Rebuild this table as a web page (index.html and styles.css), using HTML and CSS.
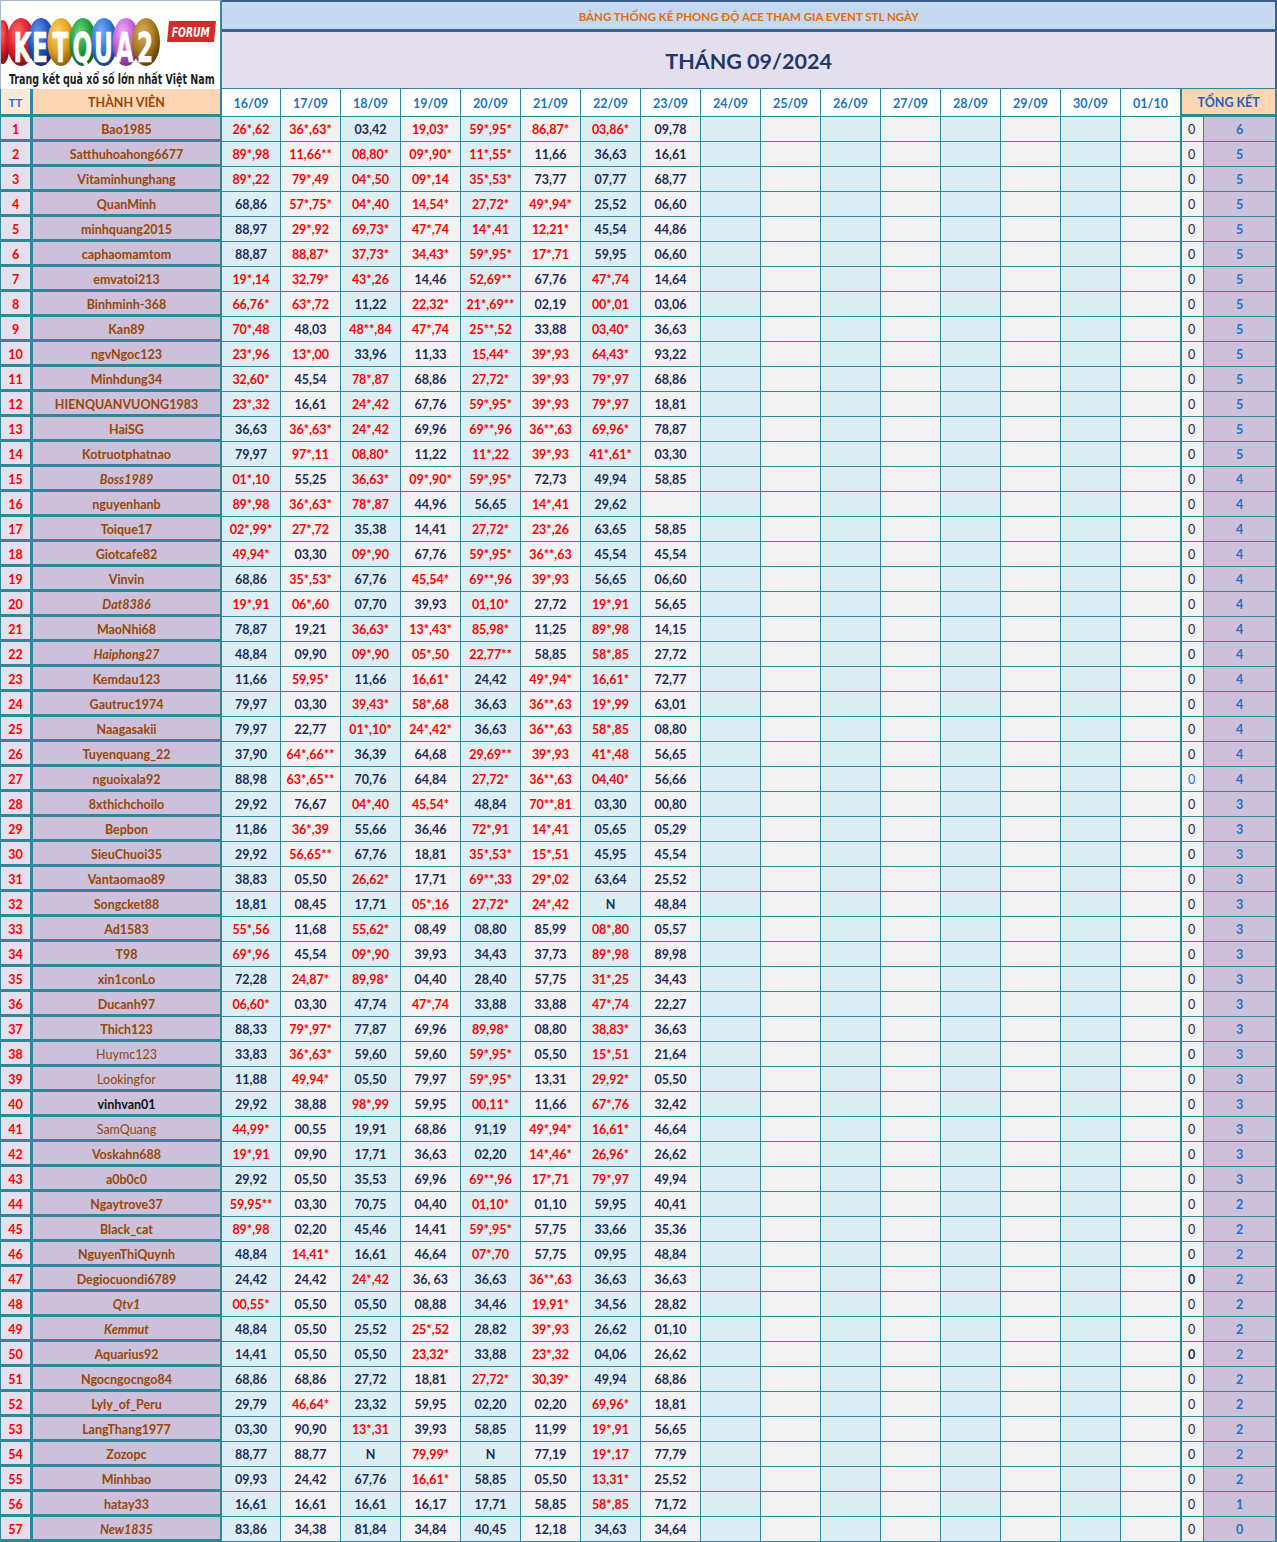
FILE: index.html
```html
<!DOCTYPE html>
<html lang="vi">
<head>
<meta charset="utf-8">
<title>Bảng thống kê phong độ ACE - Tháng 09/2024</title>
<link rel="stylesheet" href="styles.css">
</head>
<body>
<table class="sheet">
<colgroup>
<col class="w-tt"><col class="w-name"><col class="w-first">
<col class="w-d"><col class="w-d"><col class="w-d"><col class="w-d"><col class="w-d"><col class="w-d"><col class="w-d">
<col class="w-d"><col class="w-d"><col class="w-d"><col class="w-d"><col class="w-d"><col class="w-d"><col class="w-d">
<col class="w-last"><col class="w-zero"><col class="w-count">
</colgroup>
<tr class="t1">
<td class="logo" rowspan="2" colspan="2">
<svg class="logo-art" width="219" height="88" viewBox="1 1 219 88" xmlns="http://www.w3.org/2000/svg">
<defs>
<radialGradient id="gr" cx="38%" cy="30%" r="75%"><stop offset="0" stop-color="#ff6a6a"/><stop offset="0.55" stop-color="#d81e28"/><stop offset="1" stop-color="#7c0810"/></radialGradient>
<radialGradient id="gb" cx="38%" cy="30%" r="75%"><stop offset="0" stop-color="#6a9af2"/><stop offset="0.55" stop-color="#1f50b8"/><stop offset="1" stop-color="#0b2468"/></radialGradient>
<radialGradient id="gy" cx="38%" cy="30%" r="75%"><stop offset="0" stop-color="#ffd86a"/><stop offset="0.55" stop-color="#e0a020"/><stop offset="1" stop-color="#875606"/></radialGradient>
<radialGradient id="gg" cx="38%" cy="30%" r="75%"><stop offset="0" stop-color="#6ad67a"/><stop offset="0.55" stop-color="#1f9a3a"/><stop offset="1" stop-color="#0a5418"/></radialGradient>
<radialGradient id="gc" cx="38%" cy="30%" r="75%"><stop offset="0" stop-color="#7ab2ff"/><stop offset="0.55" stop-color="#2f70d0"/><stop offset="1" stop-color="#123c86"/></radialGradient>
<radialGradient id="gp" cx="38%" cy="30%" r="75%"><stop offset="0" stop-color="#f4b0ff"/><stop offset="0.55" stop-color="#c058d0"/><stop offset="1" stop-color="#74287e"/></radialGradient>
<radialGradient id="gw" cx="38%" cy="30%" r="75%"><stop offset="0" stop-color="#dcb060"/><stop offset="0.55" stop-color="#a87820"/><stop offset="1" stop-color="#563806"/></radialGradient>
</defs>
<ellipse cx="3" cy="42" rx="7" ry="22" fill="url(#gr)"/>
<ellipse cx="21" cy="42" rx="14" ry="24" fill="url(#gr)"/>
<ellipse cx="41" cy="42" rx="13.5" ry="24" fill="url(#gb)"/>
<ellipse cx="61" cy="42" rx="13.5" ry="24" fill="url(#gy)"/>
<ellipse cx="83" cy="42" rx="13.5" ry="24" fill="url(#gg)"/>
<ellipse cx="104" cy="42" rx="13.5" ry="24" fill="url(#gc)"/>
<ellipse cx="126" cy="42" rx="13.5" ry="24" fill="url(#gp)"/>
<ellipse cx="146" cy="42" rx="14" ry="24" fill="url(#gw)"/>
<text class="logo-letters" transform="scale(0.58,1)" x="38.8 69 104.3 142.2 178.4 214.7 250" y="62" text-anchor="middle">KETQUA2</text>
<path d="M169 21 L216 21 L214 42 L167 42 Z" fill="#d42a2a"/>
<text class="logo-forum" transform="scale(0.76,1)" x="226" y="37" textLength="50" lengthAdjust="spacingAndGlyphs">FORUM</text>
<text class="logo-tag" transform="scale(0.8,1)" x="11.3" y="84" textLength="257" lengthAdjust="spacingAndGlyphs">Trang kết quả xổ số lớn nhất Việt Nam</text>
</svg>
</td>
<td class="sub" colspan="18">BẢNG THỐNG KÊ PHONG ĐỘ ACE THAM GIA EVENT STL NGÀY</td>
</tr>
<tr class="t2"><td class="month" colspan="18">THÁNG 09/2024</td></tr>
<tr class="head">
<th class="tt">TT</th><th class="member">THÀNH VIÊN</th>
<th>16/09</th><th>17/09</th><th>18/09</th><th>19/09</th><th>20/09</th><th>21/09</th><th>22/09</th><th>23/09</th>
<th>24/09</th><th>25/09</th><th>26/09</th><th>27/09</th><th>28/09</th><th>29/09</th><th>30/09</th><th class="last">01/10</th>
<th class="total" colspan="2">TỔNG KẾT</th>
</tr>
<tr class="r"><td class="no">1</td><td class="name">Bao1985</td><td class="s">26*,62</td><td class="s">36*,63*</td><td>03,42</td><td class="s">19,03*</td><td class="s">59*,95*</td><td class="s">86,87*</td><td class="s">03,86*</td><td>09,78</td><td></td><td></td><td></td><td></td><td></td><td></td><td></td><td></td><td class="z">0</td><td class="n">6</td></tr>
<tr class="r"><td class="no">2</td><td class="name">Satthuhoahong6677</td><td class="s">89*,98</td><td class="s">11,66**</td><td class="s">08,80*</td><td class="s">09*,90*</td><td class="s">11*,55*</td><td>11,66</td><td>36,63</td><td>16,61</td><td></td><td></td><td></td><td></td><td></td><td></td><td></td><td></td><td class="z">0</td><td class="n">5</td></tr>
<tr class="r"><td class="no">3</td><td class="name">Vitaminhunghang</td><td class="s">89*,22</td><td class="s">79*,49</td><td class="s">04*,50</td><td class="s">09*,14</td><td class="s">35*,53*</td><td>73,77</td><td>07,77</td><td>68,77</td><td></td><td></td><td></td><td></td><td></td><td></td><td></td><td></td><td class="z">0</td><td class="n">5</td></tr>
<tr class="r"><td class="no">4</td><td class="name">QuanMinh</td><td>68,86</td><td class="s">57*,75*</td><td class="s">04*,40</td><td class="s">14,54*</td><td class="s">27,72*</td><td class="s">49*,94*</td><td>25,52</td><td>06,60</td><td></td><td></td><td></td><td></td><td></td><td></td><td></td><td></td><td class="z">0</td><td class="n">5</td></tr>
<tr class="r"><td class="no">5</td><td class="name">minhquang2015</td><td>88,97</td><td class="s">29*,92</td><td class="s">69,73*</td><td class="s">47*,74</td><td class="s">14*,41</td><td class="s">12,21*</td><td>45,54</td><td>44,86</td><td></td><td></td><td></td><td></td><td></td><td></td><td></td><td></td><td class="z">0</td><td class="n">5</td></tr>
<tr class="r"><td class="no">6</td><td class="name">caphaomamtom</td><td>88,87</td><td class="s">88,87*</td><td class="s">37,73*</td><td class="s">34,43*</td><td class="s">59*,95*</td><td class="s">17*,71</td><td>59,95</td><td>06,60</td><td></td><td></td><td></td><td></td><td></td><td></td><td></td><td></td><td class="z">0</td><td class="n">5</td></tr>
<tr class="r"><td class="no">7</td><td class="name">emvatoi213</td><td class="s">19*,14</td><td class="s">32,79*</td><td class="s">43*,26</td><td>14,46</td><td class="s">52,69**</td><td>67,76</td><td class="s">47*,74</td><td>14,64</td><td></td><td></td><td></td><td></td><td></td><td></td><td></td><td></td><td class="z">0</td><td class="n">5</td></tr>
<tr class="r"><td class="no">8</td><td class="name">Binhminh-368</td><td class="s">66,76*</td><td class="s">63*,72</td><td>11,22</td><td class="s">22,32*</td><td class="s">21*,69**</td><td>02,19</td><td class="s">00*,01</td><td>03,06</td><td></td><td></td><td></td><td></td><td></td><td></td><td></td><td></td><td class="z">0</td><td class="n">5</td></tr>
<tr class="r"><td class="no">9</td><td class="name">Kan89</td><td class="s">70*,48</td><td>48,03</td><td class="s">48**,84</td><td class="s">47*,74</td><td class="s">25**,52</td><td>33,88</td><td class="s">03,40*</td><td>36,63</td><td></td><td></td><td></td><td></td><td></td><td></td><td></td><td></td><td class="z">0</td><td class="n">5</td></tr>
<tr class="r"><td class="no">10</td><td class="name">ngvNgoc123</td><td class="s">23*,96</td><td class="s">13*,00</td><td>33,96</td><td>11,33</td><td class="s">15,44*</td><td class="s">39*,93</td><td class="s">64,43*</td><td>93,22</td><td></td><td></td><td></td><td></td><td></td><td></td><td></td><td></td><td class="z">0</td><td class="n">5</td></tr>
<tr class="r"><td class="no">11</td><td class="name">Minhdung34</td><td class="s">32,60*</td><td>45,54</td><td class="s">78*,87</td><td>68,86</td><td class="s">27,72*</td><td class="s">39*,93</td><td class="s">79*,97</td><td>68,86</td><td></td><td></td><td></td><td></td><td></td><td></td><td></td><td></td><td class="z">0</td><td class="n">5</td></tr>
<tr class="r"><td class="no">12</td><td class="name">HIENQUANVUONG1983</td><td class="s">23*,32</td><td>16,61</td><td class="s">24*,42</td><td>67,76</td><td class="s">59*,95*</td><td class="s">39*,93</td><td class="s">79*,97</td><td>18,81</td><td></td><td></td><td></td><td></td><td></td><td></td><td></td><td></td><td class="z">0</td><td class="n">5</td></tr>
<tr class="r"><td class="no">13</td><td class="name">HaiSG</td><td>36,63</td><td class="s">36*,63*</td><td class="s">24*,42</td><td>69,96</td><td class="s">69**,96</td><td class="s">36**,63</td><td class="s">69,96*</td><td>78,87</td><td></td><td></td><td></td><td></td><td></td><td></td><td></td><td></td><td class="z">0</td><td class="n">5</td></tr>
<tr class="r"><td class="no">14</td><td class="name">Kotruotphatnao</td><td>79,97</td><td class="s">97*,11</td><td class="s">08,80*</td><td>11,22</td><td class="s">11*,22</td><td class="s">39*,93</td><td class="s">41*,61*</td><td>03,30</td><td></td><td></td><td></td><td></td><td></td><td></td><td></td><td></td><td class="z">0</td><td class="n">5</td></tr>
<tr class="r"><td class="no">15</td><td class="name i">Boss1989</td><td class="s">01*,10</td><td>55,25</td><td class="s">36,63*</td><td class="s">09*,90*</td><td class="s">59*,95*</td><td>72,73</td><td>49,94</td><td>58,85</td><td></td><td></td><td></td><td></td><td></td><td></td><td></td><td></td><td class="z">0</td><td class="n">4</td></tr>
<tr class="r"><td class="no">16</td><td class="name">nguyenhanb</td><td class="s">89*,98</td><td class="s">36*,63*</td><td class="s">78*,87</td><td>44,96</td><td>56,65</td><td class="s">14*,41</td><td>29,62</td><td></td><td></td><td></td><td></td><td></td><td></td><td></td><td></td><td></td><td class="z">0</td><td class="n">4</td></tr>
<tr class="r"><td class="no">17</td><td class="name">Toique17</td><td class="s">02*,99*</td><td class="s">27*,72</td><td>35,38</td><td>14,41</td><td class="s">27,72*</td><td class="s">23*,26</td><td>63,65</td><td>58,85</td><td></td><td></td><td></td><td></td><td></td><td></td><td></td><td></td><td class="z">0</td><td class="n">4</td></tr>
<tr class="r"><td class="no">18</td><td class="name">Giotcafe82</td><td class="s">49,94*</td><td>03,30</td><td class="s">09*,90</td><td>67,76</td><td class="s">59*,95*</td><td class="s">36**,63</td><td>45,54</td><td>45,54</td><td></td><td></td><td></td><td></td><td></td><td></td><td></td><td></td><td class="z">0</td><td class="n">4</td></tr>
<tr class="r"><td class="no">19</td><td class="name">Vinvin</td><td>68,86</td><td class="s">35*,53*</td><td>67,76</td><td class="s">45,54*</td><td class="s">69**,96</td><td class="s">39*,93</td><td>56,65</td><td>06,60</td><td></td><td></td><td></td><td></td><td></td><td></td><td></td><td></td><td class="z">0</td><td class="n">4</td></tr>
<tr class="r"><td class="no">20</td><td class="name i">Dat8386</td><td class="s">19*,91</td><td class="s">06*,60</td><td>07,70</td><td>39,93</td><td class="s">01,10*</td><td>27,72</td><td class="s">19*,91</td><td>56,65</td><td></td><td></td><td></td><td></td><td></td><td></td><td></td><td></td><td class="z">0</td><td class="n">4</td></tr>
<tr class="r"><td class="no">21</td><td class="name">MaoNhi68</td><td>78,87</td><td>19,21</td><td class="s">36,63*</td><td class="s">13*,43*</td><td class="s">85,98*</td><td>11,25</td><td class="s">89*,98</td><td>14,15</td><td></td><td></td><td></td><td></td><td></td><td></td><td></td><td></td><td class="z">0</td><td class="n">4</td></tr>
<tr class="r"><td class="no">22</td><td class="name i">Haiphong27</td><td>48,84</td><td>09,90</td><td class="s">09*,90</td><td class="s">05*,50</td><td class="s">22,77**</td><td>58,85</td><td class="s">58*,85</td><td>27,72</td><td></td><td></td><td></td><td></td><td></td><td></td><td></td><td></td><td class="z">0</td><td class="n">4</td></tr>
<tr class="r"><td class="no">23</td><td class="name">Kemdau123</td><td>11,66</td><td class="s">59,95*</td><td>11,66</td><td class="s">16,61*</td><td>24,42</td><td class="s">49*,94*</td><td class="s">16,61*</td><td>72,77</td><td></td><td></td><td></td><td></td><td></td><td></td><td></td><td></td><td class="z">0</td><td class="n">4</td></tr>
<tr class="r"><td class="no">24</td><td class="name">Gautruc1974</td><td>79,97</td><td>03,30</td><td class="s">39,43*</td><td class="s">58*,68</td><td>36,63</td><td class="s">36**,63</td><td class="s">19*,99</td><td>63,01</td><td></td><td></td><td></td><td></td><td></td><td></td><td></td><td></td><td class="z">0</td><td class="n">4</td></tr>
<tr class="r"><td class="no">25</td><td class="name">Naagasakii</td><td>79,97</td><td>22,77</td><td class="s">01*,10*</td><td class="s">24*,42*</td><td>36,63</td><td class="s">36**,63</td><td class="s">58*,85</td><td>08,80</td><td></td><td></td><td></td><td></td><td></td><td></td><td></td><td></td><td class="z">0</td><td class="n">4</td></tr>
<tr class="r"><td class="no">26</td><td class="name">Tuyenquang_22</td><td>37,90</td><td class="s">64*,66**</td><td>36,39</td><td>64,68</td><td class="s">29,69**</td><td class="s">39*,93</td><td class="s">41*,48</td><td>56,65</td><td></td><td></td><td></td><td></td><td></td><td></td><td></td><td></td><td class="z">0</td><td class="n">4</td></tr>
<tr class="r"><td class="no">27</td><td class="name">nguoixala92</td><td>88,98</td><td class="s">63*,65**</td><td>70,76</td><td>64,84</td><td class="s">27,72*</td><td class="s">36**,63</td><td class="s">04,40*</td><td>56,66</td><td></td><td></td><td></td><td></td><td></td><td></td><td></td><td></td><td class="z zb">0</td><td class="n">4</td></tr>
<tr class="r"><td class="no">28</td><td class="name">8xthichchoilo</td><td>29,92</td><td>76,67</td><td class="s">04*,40</td><td class="s">45,54*</td><td>48,84</td><td class="s">70**,81</td><td>03,30</td><td>00,80</td><td></td><td></td><td></td><td></td><td></td><td></td><td></td><td></td><td class="z">0</td><td class="n">3</td></tr>
<tr class="r"><td class="no">29</td><td class="name">Bepbon</td><td>11,86</td><td class="s">36*,39</td><td>55,66</td><td>36,46</td><td class="s">72*,91</td><td class="s">14*,41</td><td>05,65</td><td>05,29</td><td></td><td></td><td></td><td></td><td></td><td></td><td></td><td></td><td class="z">0</td><td class="n">3</td></tr>
<tr class="r"><td class="no">30</td><td class="name">SieuChuoi35</td><td>29,92</td><td class="s">56,65**</td><td>67,76</td><td>18,81</td><td class="s">35*,53*</td><td class="s">15*,51</td><td>45,95</td><td>45,54</td><td></td><td></td><td></td><td></td><td></td><td></td><td></td><td></td><td class="z">0</td><td class="n">3</td></tr>
<tr class="r"><td class="no">31</td><td class="name">Vantaomao89</td><td>38,83</td><td>05,50</td><td class="s">26,62*</td><td>17,71</td><td class="s">69**,33</td><td class="s">29*,02</td><td>63,64</td><td>25,52</td><td></td><td></td><td></td><td></td><td></td><td></td><td></td><td></td><td class="z">0</td><td class="n">3</td></tr>
<tr class="r"><td class="no">32</td><td class="name">Songcket88</td><td>18,81</td><td>08,45</td><td>17,71</td><td class="s">05*,16</td><td class="s">27,72*</td><td class="s">24*,42</td><td>N</td><td>48,84</td><td></td><td></td><td></td><td></td><td></td><td></td><td></td><td></td><td class="z">0</td><td class="n">3</td></tr>
<tr class="r"><td class="no">33</td><td class="name">Ad1583</td><td class="s">55*,56</td><td>11,68</td><td class="s">55,62*</td><td>08,49</td><td>08,80</td><td>85,99</td><td class="s">08*,80</td><td>05,57</td><td></td><td></td><td></td><td></td><td></td><td></td><td></td><td></td><td class="z">0</td><td class="n">3</td></tr>
<tr class="r"><td class="no">34</td><td class="name">T98</td><td class="s">69*,96</td><td>45,54</td><td class="s">09*,90</td><td>39,93</td><td>34,43</td><td>37,73</td><td class="s">89*,98</td><td>89,98</td><td></td><td></td><td></td><td></td><td></td><td></td><td></td><td></td><td class="z">0</td><td class="n">3</td></tr>
<tr class="r"><td class="no">35</td><td class="name">xin1conLo</td><td>72,28</td><td class="s">24,87*</td><td class="s">89,98*</td><td>04,40</td><td>28,40</td><td>57,75</td><td class="s">31*,25</td><td>34,43</td><td></td><td></td><td></td><td></td><td></td><td></td><td></td><td></td><td class="z">0</td><td class="n">3</td></tr>
<tr class="r"><td class="no">36</td><td class="name">Ducanh97</td><td class="s">06,60*</td><td>03,30</td><td>47,74</td><td class="s">47*,74</td><td>33,88</td><td>33,88</td><td class="s">47*,74</td><td>22,27</td><td></td><td></td><td></td><td></td><td></td><td></td><td></td><td></td><td class="z">0</td><td class="n">3</td></tr>
<tr class="r"><td class="no">37</td><td class="name">Thich123</td><td>88,33</td><td class="s">79*,97*</td><td>77,87</td><td>69,96</td><td class="s">89,98*</td><td>08,80</td><td class="s">38,83*</td><td>36,63</td><td></td><td></td><td></td><td></td><td></td><td></td><td></td><td></td><td class="z">0</td><td class="n">3</td></tr>
<tr class="r"><td class="no">38</td><td class="name w">Huymc123</td><td>33,83</td><td class="s">36*,63*</td><td>59,60</td><td>59,60</td><td class="s">59*,95*</td><td>05,50</td><td class="s">15*,51</td><td>21,64</td><td></td><td></td><td></td><td></td><td></td><td></td><td></td><td></td><td class="z">0</td><td class="n">3</td></tr>
<tr class="r"><td class="no">39</td><td class="name w">Lookingfor</td><td>11,88</td><td class="s">49,94*</td><td>05,50</td><td>79,97</td><td class="s">59*,95*</td><td>13,31</td><td class="s">29,92*</td><td>05,50</td><td></td><td></td><td></td><td></td><td></td><td></td><td></td><td></td><td class="z">0</td><td class="n">3</td></tr>
<tr class="r"><td class="no">40</td><td class="name k">vinhvan01</td><td>29,92</td><td>38,88</td><td class="s">98*,99</td><td>59,95</td><td class="s">00,11*</td><td>11,66</td><td class="s">67*,76</td><td>32,42</td><td></td><td></td><td></td><td></td><td></td><td></td><td></td><td></td><td class="z">0</td><td class="n">3</td></tr>
<tr class="r"><td class="no">41</td><td class="name w">SamQuang</td><td class="s">44,99*</td><td>00,55</td><td>19,91</td><td>68,86</td><td>91,19</td><td class="s">49*,94*</td><td class="s">16,61*</td><td>46,64</td><td></td><td></td><td></td><td></td><td></td><td></td><td></td><td></td><td class="z">0</td><td class="n">3</td></tr>
<tr class="r"><td class="no">42</td><td class="name">Voskahn688</td><td class="s">19*,91</td><td>09,90</td><td>17,71</td><td>36,63</td><td>02,20</td><td class="s">14*,46*</td><td class="s">26,96*</td><td>26,62</td><td></td><td></td><td></td><td></td><td></td><td></td><td></td><td></td><td class="z">0</td><td class="n">3</td></tr>
<tr class="r"><td class="no">43</td><td class="name">a0b0c0</td><td>29,92</td><td>05,50</td><td>35,53</td><td>69,96</td><td class="s">69**,96</td><td class="s">17*,71</td><td class="s">79*,97</td><td>49,94</td><td></td><td></td><td></td><td></td><td></td><td></td><td></td><td></td><td class="z">0</td><td class="n">3</td></tr>
<tr class="r"><td class="no">44</td><td class="name">Ngaytrove37</td><td class="s">59,95**</td><td>03,30</td><td>70,75</td><td>04,40</td><td class="s">01,10*</td><td>01,10</td><td>59,95</td><td>40,41</td><td></td><td></td><td></td><td></td><td></td><td></td><td></td><td></td><td class="z">0</td><td class="n">2</td></tr>
<tr class="r"><td class="no">45</td><td class="name">Black_cat</td><td class="s">89*,98</td><td>02,20</td><td>45,46</td><td>14,41</td><td class="s">59*,95*</td><td>57,75</td><td>33,66</td><td>35,36</td><td></td><td></td><td></td><td></td><td></td><td></td><td></td><td></td><td class="z">0</td><td class="n">2</td></tr>
<tr class="r"><td class="no">46</td><td class="name">NguyenThiQuynh</td><td>48,84</td><td class="s">14,41*</td><td>16,61</td><td>46,64</td><td class="s">07*,70</td><td>57,75</td><td>09,95</td><td>48,84</td><td></td><td></td><td></td><td></td><td></td><td></td><td></td><td></td><td class="z">0</td><td class="n">2</td></tr>
<tr class="r"><td class="no">47</td><td class="name">Degiocuondi6789</td><td>24,42</td><td>24,42</td><td class="s">24*,42</td><td>36, 63</td><td>36,63</td><td class="s">36**,63</td><td>36,63</td><td>36,63</td><td></td><td></td><td></td><td></td><td></td><td></td><td></td><td></td><td class="z zk">0</td><td class="n">2</td></tr>
<tr class="r"><td class="no">48</td><td class="name i">Qtv1</td><td class="s">00,55*</td><td>05,50</td><td>05,50</td><td>08,88</td><td>34,46</td><td class="s">19,91*</td><td>34,56</td><td>28,82</td><td></td><td></td><td></td><td></td><td></td><td></td><td></td><td></td><td class="z">0</td><td class="n">2</td></tr>
<tr class="r"><td class="no">49</td><td class="name i">Kemmut</td><td>48,84</td><td>05,50</td><td>25,52</td><td class="s">25*,52</td><td>28,82</td><td class="s">39*,93</td><td>26,62</td><td>01,10</td><td></td><td></td><td></td><td></td><td></td><td></td><td></td><td></td><td class="z">0</td><td class="n">2</td></tr>
<tr class="r"><td class="no">50</td><td class="name">Aquarius92</td><td>14,41</td><td>05,50</td><td>05,50</td><td class="s">23,32*</td><td>33,88</td><td class="s">23*,32</td><td>04,06</td><td>26,62</td><td></td><td></td><td></td><td></td><td></td><td></td><td></td><td></td><td class="z zk">0</td><td class="n">2</td></tr>
<tr class="r"><td class="no">51</td><td class="name">Ngocngocngo84</td><td>68,86</td><td>68,86</td><td>27,72</td><td>18,81</td><td class="s">27,72*</td><td class="s">30,39*</td><td>49,94</td><td>68,86</td><td></td><td></td><td></td><td></td><td></td><td></td><td></td><td></td><td class="z">0</td><td class="n">2</td></tr>
<tr class="r"><td class="no">52</td><td class="name">Lyly_of_Peru</td><td>29,79</td><td class="s">46,64*</td><td>23,32</td><td>59,95</td><td>02,20</td><td>02,20</td><td class="s">69,96*</td><td>18,81</td><td></td><td></td><td></td><td></td><td></td><td></td><td></td><td></td><td class="z">0</td><td class="n">2</td></tr>
<tr class="r"><td class="no">53</td><td class="name">LangThang1977</td><td>03,30</td><td>90,90</td><td class="s">13*,31</td><td>39,93</td><td>58,85</td><td>11,99</td><td class="s">19*,91</td><td>56,65</td><td></td><td></td><td></td><td></td><td></td><td></td><td></td><td></td><td class="z">0</td><td class="n">2</td></tr>
<tr class="r"><td class="no">54</td><td class="name">Zozopc</td><td>88,77</td><td>88,77</td><td>N</td><td class="s">79,99*</td><td>N</td><td>77,19</td><td class="s">19*,17</td><td>77,79</td><td></td><td></td><td></td><td></td><td></td><td></td><td></td><td></td><td class="z">0</td><td class="n">2</td></tr>
<tr class="r"><td class="no">55</td><td class="name">Minhbao</td><td>09,93</td><td>24,42</td><td>67,76</td><td class="s">16,61*</td><td>58,85</td><td>05,50</td><td class="s">13,31*</td><td>25,52</td><td></td><td></td><td></td><td></td><td></td><td></td><td></td><td></td><td class="z">0</td><td class="n">2</td></tr>
<tr class="r"><td class="no">56</td><td class="name">hatay33</td><td>16,61</td><td>16,61</td><td>16,61</td><td>16,17</td><td>17,71</td><td>58,85</td><td class="s">58*,85</td><td>71,72</td><td></td><td></td><td></td><td></td><td></td><td></td><td></td><td></td><td class="z">0</td><td class="n">1</td></tr>
<tr class="r"><td class="no">57</td><td class="name i">New1835</td><td>83,86</td><td>34,38</td><td>81,84</td><td>34,84</td><td>40,45</td><td>12,18</td><td>34,63</td><td>34,64</td><td></td><td></td><td></td><td></td><td></td><td></td><td></td><td></td><td class="z">0</td><td class="n">0</td></tr>
</table>
</body>
</html>
```

FILE: styles.css
```css
* { box-sizing: border-box; }

body {
  margin: 0;
  background: #ffffff;
  font-family: Lato, "Open Sans", "Liberation Sans", sans-serif;
}

.sheet {
  border-collapse: separate;
  border-spacing: 0;
  table-layout: fixed;
  width: 1277px;
}

.w-tt { width: 33px; }
.w-name { width: 189px; }
.w-first { width: 59px; }
.w-d { width: 60px; }
.w-last { width: 61px; }
.w-zero { width: 22px; }
.w-count { width: 73px; }

.sheet td,
.sheet th {
  padding: 0;
  text-align: center;
  vertical-align: middle;
  font-size: 12.5px;
  font-weight: 700;
  white-space: nowrap;
  overflow: hidden;
  line-height: 15px;
}

/* ---------- title block ---------- */
.t1 { height: 32px; }
.t2 { height: 57px; }

.logo {
  background: #ffffff;
  border-top: 1px solid #a9b8c8;
  border-left: 1px solid #a9b8c8;
  border-right: 2px solid #31869b;
  vertical-align: top !important;
}

.logo-art { display: block; overflow: hidden; }

.logo-letters {
  font-family: "DejaVu Sans", sans-serif;
  font-weight: 700;
  font-size: 40px;
  fill: #ffffff;
  stroke: #ffffff;
  stroke-width: 0.6px;
}

.logo-forum {
  font-family: "DejaVu Sans Condensed", "DejaVu Sans", sans-serif;
  font-weight: 700;
  font-style: italic;
  font-size: 14px;
  fill: #ffffff;
}

.logo-tag {
  font-family: "DejaVu Sans Condensed", "DejaVu Sans", sans-serif;
  font-size: 14px;
  fill: #1e1e1e;
}

.sub {
  background: #c5d9f1;
  border-top: 2px solid #3c5f8f;
  border-bottom: 3px solid #3c5f8f;
  border-right: 2px solid #3c5f8f;
  color: #e46c0a;
  font-size: 11.5px !important;
  padding-top: 1px !important;
}

.month {
  background: #e4dfec;
  border-bottom: 1px solid #31869b;
  border-right: 2px solid #3c5f8f;
  color: #1f3864;
  font-size: 21.5px !important;
  line-height: 26px !important;
  padding-top: 2px !important;
}

/* ---------- header row ---------- */
.head { height: 28px; }

.head th {
  background: #ffffff;
  color: #1a73c8;
  border-right: 1px solid #31869b;
  border-bottom: 1px solid #31869b;
  padding-top: 2px;
}

.head th.tt {
  background: #fde9d9;
  color: #2e6bd0;
  border-left: 1px solid #31869b;
  border-right: 3px solid #31869b;
  border-bottom: 3px solid #31869b;
  font-size: 11.5px;
}

.head th.member {
  background: #fcd5b4;
  color: #974706;
  border-right: 2px solid #31869b;
  border-bottom: 3px solid #31869b;
}

.head th.last { border-right-width: 2px; }

.head th.total {
  background: #fcd5b4;
  color: #1f5fb4;
  border-right: 2px solid #31869b;
  border-bottom: 3px solid #31869b;
}

/* ---------- data rows ---------- */
.r { height: 25px; }

.r td {
  border-right: 1px solid #31869b;
  border-bottom: 1px solid #31869b;
  color: #1b2a5a;
  padding-top: 1px;
}

.r td:nth-child(odd) { background: #daeef3; }
.r td:nth-child(even) { background: #f2f2f2; }
.r td:nth-child(18) { border-right-width: 2px; }

.r td.s { color: #ff0000; }

.r td.no {
  background: #e4dfec;
  color: #ff0000;
  border-left: 1px solid #31869b;
  border-right: 3px solid #31869b;
  border-bottom: 3px solid #31869b;
  padding-top: 3px;
}

.r td.name {
  background: #ccc0da;
  color: #974706;
  border-right: 2px solid #31869b;
  border-bottom: 3px solid #31869b;
  padding-top: 3px;
}

.r td.name.i { font-style: italic; }
.r td.name.w { font-weight: 400; color: #8a4a10; }
.r td.name.k { color: #111111; }

.r td.z {
  background: #f2f2f2;
  color: #1b2a5a;
  font-weight: 400;
  text-align: left;
  padding-left: 6px;
}

.r td.z.zb { color: #1a73c8; }
.r td.z.zk { font-weight: 700; }

.r td.n {
  background: #ccc0da;
  color: #1f6fc8;
  border-right: 2px solid #31869b;
}
```
